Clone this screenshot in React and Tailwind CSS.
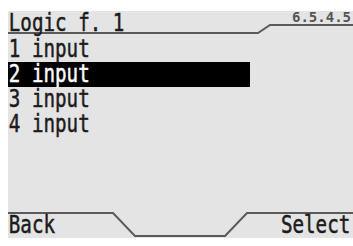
const items = ['1 input', '2 input', '3 input', '4 input']

const Frame = () => (
  <svg
    className="absolute inset-0 pointer-events-none"
    width="345"
    height="227"
    viewBox="0 0 345 227"
    fill="none"
  >
    <path d="M0 22 H250 L262 14 H345" stroke="#5a5a5a" strokeWidth="2" />
    <path d="M0 202 H105 L127 225 H217 L239 202 H345" stroke="#5a5a5a" strokeWidth="2" />
  </svg>
)

const textCls =
  'block text-[24px] leading-[25px] scale-x-[0.8] [-webkit-text-stroke:0.5px_currentColor] whitespace-pre'

export default function App() {
  return (
    <div className="w-[353px] h-[246px] bg-white pt-[11px] pl-[8px] overflow-hidden font-['DejaVu_Sans_Mono',monospace]">
      <div className="relative w-[345px] h-[227px] bg-[#e4e4e4] text-[#1c1c1c] flex flex-col">
        <Frame />

        {/* Header */}
        <div className="h-[26px] flex justify-between items-start">
          <span className={`${textCls} origin-left pl-px`}>Logic f. 1</span>
          <span className="block -mt-px mr-[2px] text-[14px] leading-[14px] font-bold text-[#555]">
            6.5.4.5
          </span>
        </div>

        {/* Menu */}
        <div className="flex flex-col">
          {items.map((label, i) => (
            <div
              key={label}
              className={
                i === 1
                  ? 'w-[242px] h-[25px] bg-black text-white'
                  : 'w-[242px] h-[25px]'
              }
            >
              <span className={`${textCls} origin-left pl-px`}>{label}</span>
            </div>
          ))}
        </div>

        {/* Soft keys */}
        <div className="mt-auto h-[25px] flex justify-between items-end">
          <span className={`${textCls} origin-left pl-px`}>Back</span>
          <span className={`${textCls} origin-right pr-[3px]`}>Select</span>
        </div>
      </div>
    </div>
  )
}
